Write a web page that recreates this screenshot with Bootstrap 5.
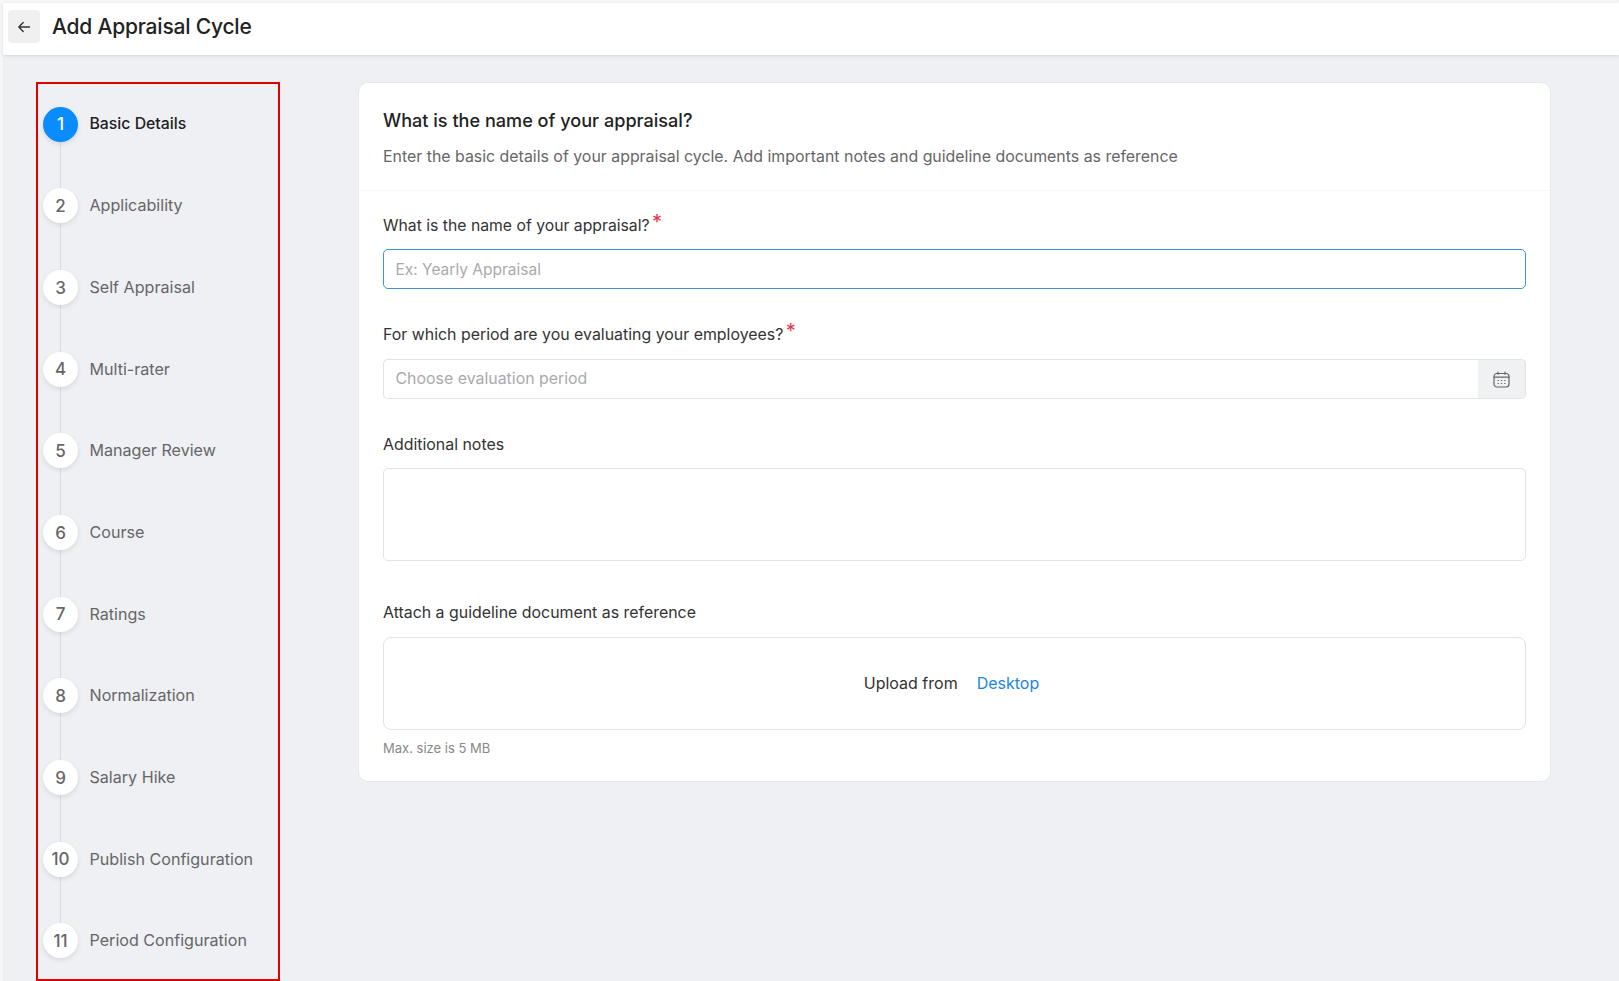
<!DOCTYPE html>
<html lang="en">
  <head>
    <meta charset="UTF-8" />
    <title>Add Appraisal Cycle</title>
    <link href="https://cdn.jsdelivr.net/npm/bootstrap@5.3.3/dist/css/bootstrap.min.css" rel="stylesheet" />
    <style>
      body { background: #f6f6f7; font-family: Inter, "Noto Sans", sans-serif; height: 981px; overflow: hidden; color: #222; padding: 3px 0 0 3px; }
      .page-wrap { background: #eef0f4; height: 978px; }
      /* header */
      .top-head { height: 52px; background: #fff; box-shadow: 0 1px 3px rgba(0,0,0,.12); padding: 0 0 5px 5px; gap: 12px; }
      .back-btn { width: 32px; height: 33px; background: #f0f0f1; border-radius: 4px; }
      .top-head h1 { font-size: 21px; font-weight: 500; margin: 0; color: #222; letter-spacing: -.2px; }
      /* steps */
      .body-row { padding: 27px 0 0 33px; }
      .steps-box { width: 244px; height: 899px; border: 2px solid #e00000; padding: 22.5px 0 0 5px; flex-shrink: 0; position: relative; }
      .step-item { height: 81.7px; gap: 11.5px; align-items: flex-start; position: relative; }
      .step-item:not(:last-child)::before { content: ""; position: absolute; left: 17px; top: 30px; bottom: -5px; width: 1px; background: #d9dbe0; }
      .step-num { width: 35px; height: 35px; padding-top: 2px; border-radius: 50%; background: #fff; color: #666; font-size: 17px; font-weight: 500; box-shadow: 0 2px 5px rgba(0,0,0,.1); position: relative; flex-shrink: 0; }
      .step-text { font-size: 16.1px; color: #666; line-height: 34px; }
      .step-item.current .step-num { background: #0a8cff; color: #fff; }
      .step-item.current .step-text { color: #222; font-weight: 500; font-size: 15.8px; }
      /* form card */
      .form-panel { width: 1193px; height: 700px; margin: 0 0 0 78px; background: #fff; border: 1px solid #e6e8ee; border-radius: 10px; }
      .panel-head { height: 108px; padding: 27px 24px 0; border-bottom: 1px solid #f7f7f8; }
      .panel-head h2 { font-size: 18.1px; font-weight: 500; margin: 0 0 13px; color: #222; }
      .panel-head p { font-size: 15.9px; color: #666; margin: 0; }
      .panel-body { padding: 21px 24px 0; }
      .fld-label { font-size: 15.9px; color: #333; margin: 0 0 13.5px; line-height: 22px; display: block; }
      .fld-label.tight-label { margin-bottom: 11.5px; font-size: 15.75px; }
      .fld-label.notes-label { margin-bottom: 12px; }
      .fld-label.attach-label { margin-bottom: 12.5px; }
      .req { color: #e8354a; font-size: 20px; line-height: 1; vertical-align: 2px; margin-left: -2px; }
      .fld-input.form-control { height: 40px; font-size: 15.9px; border-radius: 5px; border: 1px solid #e3e3e3; padding: 0 12px 1px 11.5px; color: #333; box-shadow: none; }
      .fld-input::placeholder { color: #aaa; opacity: 1; }
      .fld-input.is-on.form-control { border-color: #3f93d8; font-size: 15.5px; padding: 1px 12px 0 11.5px; }
      .fld-group { margin-bottom: 32px; }
      .fld-group.period-group { margin-bottom: 35px; }
      .fld-group.notes-group { margin-bottom: 41px; }
      .cal-btn { width: 48px; flex-shrink: 0; background: #f0f1f3; border: 1px solid #e3e3e3; border-left: 0; border-radius: 0 5px 5px 0; }
      .group-left.form-control { border-radius: 5px 0 0 5px; border-right: 0; }
      .notes-box.form-control { height: 93px; resize: none; border-radius: 5px; border: 1px solid #e3e3e3; box-shadow: none; }
      .upload-box { height: 93px; padding-right: 6px; border: 1px solid #e3e3e3; border-radius: 8px; font-size: 16px; color: #333; gap: 19px; }
      .upload-box a { color: #1a86e0; text-decoration: none; }
      .size-note { font-size: 13px; color: #888; margin-top: 9px; }
    </style>
  </head>
  <body>
    <div class="page-wrap">
      <!--header-->
      <div class="top-head d-flex align-items-center">
        <div class="back-btn d-flex align-items-center justify-content-center">
          <svg width="14" height="14" viewBox="0 0 14 14" fill="none" stroke="#333" stroke-width="1.4" stroke-linecap="round" stroke-linejoin="round"><path d="M12.5 7H1.8M6.2 2.6 1.8 7l4.4 4.4" /></svg>
        </div>
        <h1>Add Appraisal Cycle</h1>
      </div>

      <div class="body-row d-flex align-items-start">
        <!--steps-->
        <div class="steps-box">
          <div class="step-item current d-flex"><div class="step-num d-flex align-items-center justify-content-center">1</div><div class="step-text">Basic Details</div></div>
          <div class="step-item d-flex"><div class="step-num d-flex align-items-center justify-content-center">2</div><div class="step-text">Applicability</div></div>
          <div class="step-item d-flex"><div class="step-num d-flex align-items-center justify-content-center">3</div><div class="step-text">Self Appraisal</div></div>
          <div class="step-item d-flex"><div class="step-num d-flex align-items-center justify-content-center">4</div><div class="step-text">Multi-rater</div></div>
          <div class="step-item d-flex"><div class="step-num d-flex align-items-center justify-content-center">5</div><div class="step-text">Manager Review</div></div>
          <div class="step-item d-flex"><div class="step-num d-flex align-items-center justify-content-center">6</div><div class="step-text">Course</div></div>
          <div class="step-item d-flex"><div class="step-num d-flex align-items-center justify-content-center">7</div><div class="step-text">Ratings</div></div>
          <div class="step-item d-flex"><div class="step-num d-flex align-items-center justify-content-center">8</div><div class="step-text">Normalization</div></div>
          <div class="step-item d-flex"><div class="step-num d-flex align-items-center justify-content-center">9</div><div class="step-text">Salary Hike</div></div>
          <div class="step-item d-flex"><div class="step-num d-flex align-items-center justify-content-center">10</div><div class="step-text">Publish Configuration</div></div>
          <div class="step-item d-flex"><div class="step-num d-flex align-items-center justify-content-center">11</div><div class="step-text">Period Configuration</div></div>
        </div>

        <!--form-->
        <div class="form-panel">
          <div class="panel-head">
            <h2>What is the name of your appraisal?</h2>
            <p>Enter the basic details of your appraisal cycle. Add important notes and guideline documents as reference</p>
          </div>
          <div class="panel-body">
            <div class="fld-group">
              <label class="fld-label tight-label">What is the name of your appraisal? <span class="req">*</span></label>
              <input class="form-control fld-input is-on" type="text" placeholder="Ex: Yearly Appraisal" />
            </div>
            <div class="fld-group period-group">
              <label class="fld-label">For which period are you evaluating your employees? <span class="req">*</span></label>
              <div class="d-flex">
                <input class="form-control fld-input group-left" type="text" placeholder="Choose evaluation period" />
                <div class="cal-btn d-flex align-items-center justify-content-center">
                  <svg width="17" height="17" viewBox="0 0 17 17" fill="none" stroke="#666" stroke-width="1.2" stroke-linecap="round"><rect x="1" y="2.5" width="15" height="13.5" rx="3" /><path d="M1 6.2h15M5 1v2.2M12 1v2.2" /><path d="M5 9.5h.4M8.3 9.5h.4M11.6 9.5h.4M5 12.5h.4M8.3 12.5h.4M11.6 12.5h.4" /></svg>
                </div>
              </div>
            </div>
            <div class="fld-group notes-group">
              <label class="fld-label notes-label">Additional notes</label>
              <textarea class="form-control notes-box"></textarea>
            </div>
            <div>
              <label class="fld-label attach-label">Attach a guideline document as reference</label>
              <div class="upload-box d-flex align-items-center justify-content-center">
                <span>Upload from</span><a href="#">Desktop</a>
              </div>
              <div class="size-note">Max. size is 5 MB</div>
            </div>
          </div>
        </div>
      </div>
    </div>
    <script src="https://cdn.jsdelivr.net/npm/bootstrap@5.3.3/dist/js/bootstrap.bundle.min.js"></script>
  </body>
</html>
